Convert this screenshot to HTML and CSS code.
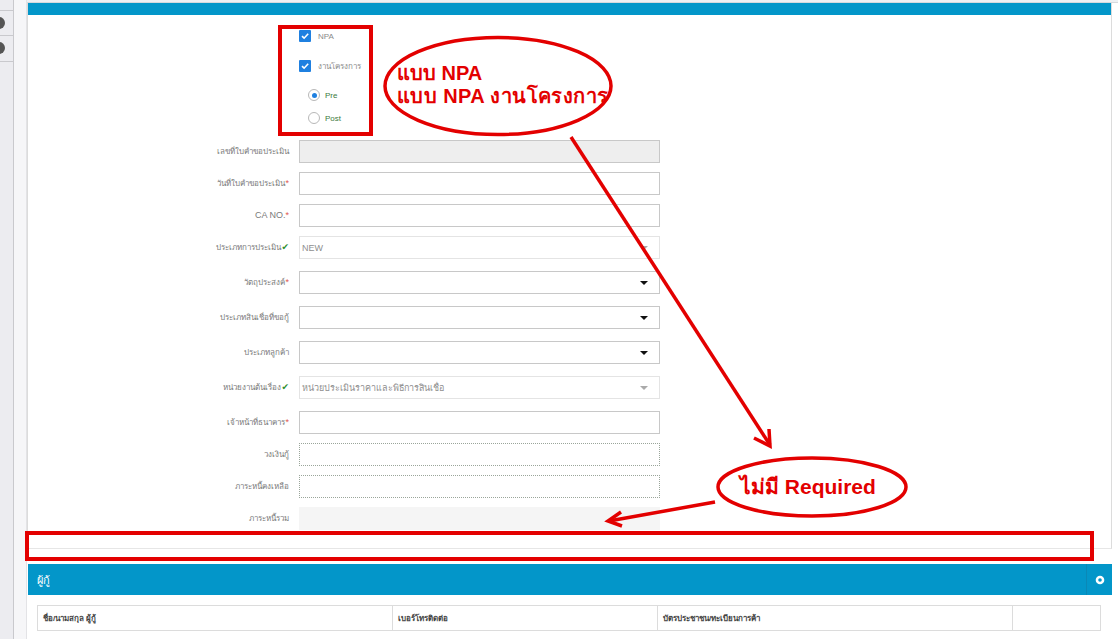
FILE: index.html
```html
<!DOCTYPE html>
<html lang="th">
<head>
<meta charset="utf-8">
<title>NPA</title>
<link rel="stylesheet" href="styles.css">
</head>
<body>
<div class="page">
  <aside class="rail">
    <div class="rail-item"><span class="dot"></span></div>
    <div class="rail-item"><span class="dot"></span></div>
  </aside>
  <div class="gutter"></div>
  <main class="content">
    <section class="panel">
      <div class="panel-bar"></div>
      <div class="panel-body">
        <div class="checks">
          <label class="check c1"><span class="box"><svg width="12" height="12" viewBox="0 0 12 12"><path d="M3 6.2 L5.1 8.2 L9.2 3.8" fill="none" stroke="#fff" stroke-width="1.6"/></svg></span><span class="check-text">NPA</span></label>
          <label class="check c2"><span class="box"><svg width="12" height="12" viewBox="0 0 12 12"><path d="M3 6.2 L5.1 8.2 L9.2 3.8" fill="none" stroke="#fff" stroke-width="1.6"/></svg></span><span class="check-text">งานโครงการ</span></label>
          <label class="radio r1"><span class="circle on"></span><span class="radio-text">Pre</span></label>
          <label class="radio r2"><span class="circle"></span><span class="radio-text">Post</span></label>
        </div>
        <div class="form">
          <div class="row rt"><span class="lbl">เลขที่ใบคำขอประเมิน</span><div class="field readonly"></div></div>
          <div class="row rt"><span class="lbl">วันที่ใบคำขอประเมิน<i class="req">*</i></span><div class="field"></div></div>
          <div class="row rt"><span class="lbl lbl-lg">CA NO.<i class="req">*</i></span><div class="field"></div></div>
          <div class="row rs"><span class="lbl">ประเภทการประเมิน<i class="ok">✔</i></span><div class="field select disabled"><span class="val">NEW</span></div></div>
          <div class="row rs"><span class="lbl">วัตถุประสงค์<i class="req">*</i></span><div class="field select"></div></div>
          <div class="row rs"><span class="lbl">ประเภทสินเชื่อที่ขอกู้</span><div class="field select"></div></div>
          <div class="row rs"><span class="lbl">ประเภทลูกค้า</span><div class="field select"></div></div>
          <div class="row rs"><span class="lbl">หน่วยงานต้นเรื่อง<i class="ok">✔</i></span><div class="field select disabled"><span class="val">หน่วยประเมินราคาและพิธีการสินเชื่อ</span></div></div>
          <div class="row rt"><span class="lbl">เจ้าหน้าที่ธนาคาร<i class="req">*</i></span><div class="field"></div></div>
          <div class="row rt"><span class="lbl">วงเงินกู้</span><div class="field dotted"></div></div>
          <div class="row rt"><span class="lbl">ภาระหนี้คงเหลือ</span><div class="field dotted"></div></div>
          <div class="row rt"><span class="lbl">ภาระหนี้รวม</span><div class="field plain"></div></div>
        </div>
      </div>
    </section>
    <section class="panel2">
      <header class="panel-head">
        <span class="head-title">ผู้กู้</span>
        <span class="head-tool"><svg width="10" height="10" viewBox="0 0 10 10"><circle cx="5" cy="5" r="4.3" fill="#fff"/><circle cx="5" cy="5" r="1.8" fill="#0396c9"/></svg></span>
      </header>
      <div class="panel2-body">
        <table class="grid">
          <thead>
            <tr><th class="w1">ชื่อ/นามสกุล ผู้กู้</th><th class="w2">เบอร์โทรติดต่อ</th><th class="w3">บัตรประชาชน/ทะเบียนการค้า</th><th class="w4"></th></tr>
          </thead>
        </table>
      </div>
    </section>
  </main>

  <svg class="annot" width="1118" height="639" viewBox="0 0 1118 639">
    <g fill="none" stroke="#e30000">
      <rect x="280" y="27" width="91" height="107" stroke-width="4"/>
      <rect x="27" y="533" width="1065" height="26" stroke-width="4"/>
      <ellipse cx="498" cy="86" rx="113" ry="48.5" stroke-width="3.5"/>
      <ellipse cx="812" cy="487" rx="94" ry="29" stroke-width="3.5"/>
      <line x1="571" y1="137" x2="770" y2="445" stroke-width="3.5"/>
      <polyline points="754,438 770,446 769,429" stroke-width="3.5" stroke-linejoin="miter"/>
      <line x1="715" y1="502" x2="609" y2="521" stroke-width="3.5"/>
      <polyline points="621,512 608,521 622,526" stroke-width="3.5"/>
    </g>
    <g fill="#e30000" font-family="'Liberation Sans', 'DejaVu Sans', sans-serif" font-weight="bold">
      <text x="397" y="80" font-size="20">แบบ NPA</text>
      <text x="397" y="103" font-size="20" textLength="211" lengthAdjust="spacing">แบบ NPA งานโครงการ</text>
      <text x="740" y="494" font-size="21">ไม่มี Required</text>
    </g>
  </svg>
</div>
</body>
</html>
```

FILE: styles.css
```css
* { box-sizing: border-box; }
html, body { margin: 0; padding: 0; }
body {
  width: 1118px;
  height: 639px;
  overflow: hidden;
  background: #fff;
  font-family: "Liberation Sans", "DejaVu Sans", sans-serif;
  color: #333;
}
.page {
  position: relative;
  display: flex;
  height: 639px;
}

/* left rail */
.rail {
  width: 14px;
  flex: none;
  background: #ececf0;
  border-right: 1px solid #c9c9cd;
  padding-top: 10px;
}
.rail-item {
  position: relative;
  height: 25px;
  border-top: 1px solid #c9c9cd;
  overflow: hidden;
}
.rail-item:last-child {
  height: 27px;
  border-bottom: 1px solid #c9c9cd;
}
.dot {
  position: absolute;
  left: -7px;
  top: 6px;
  width: 12px;
  height: 12px;
  border-radius: 50%;
  background: #555;
}
.gutter {
  width: 13px;
  flex: none;
  background: #f6f6f8;
  border-right: 1px solid #e3e3e6;
}

/* content */
.content {
  flex: 1;
  padding: 3px 6px 0 0;
  background: linear-gradient(#eef0f3 0 2px, #d6d9dd 2px 3px, #fff 3px);
}
.panel {
  height: 546px;
  border-left: 1px solid #dcdcdc;
  border-right: 1px solid #dcdcdc;
  border-bottom: 1px solid #e6e6e6;
  background: #fff;
}
.panel-bar {
  height: 12px;
  background: #0396c9;
}
.panel-body {
  padding-top: 15px;
}

/* checkboxes */
.checks {
  display: flex;
  flex-direction: column;
  padding-left: 271px;
  height: 110px;
}
.check, .radio {
  display: flex;
  align-items: center;
  height: 12px;
  font-size: 8px;
}
.c2 { margin-top: 18px; }
.r1 { margin-top: 17px; padding-left: 9px; }
.r2 { margin-top: 11px; padding-left: 9px; }
.box {
  width: 12px;
  height: 12px;
  background: #1f80e0;
  border-radius: 1px;
  display: flex;
}
.check-text {
  margin-left: 7px;
  color: #8a8a8a;
}
.circle {
  width: 12px;
  height: 12px;
  border-radius: 50%;
  border: 1px solid #b8b8b8;
  background: #fff;
  display: flex;
  align-items: center;
  justify-content: center;
}
.circle.on::before {
  content: "";
  width: 5px;
  height: 5px;
  border-radius: 50%;
  background: #1f80e0;
}
.radio-text {
  margin-left: 5px;
  color: #3d7a3d;
}

/* form */
.form {
  display: flex;
  flex-direction: column;
}
.row {
  display: grid;
  grid-template-columns: 261px 361px;
  column-gap: 10px;
  align-items: start;
}
.rt { height: 32px; }
.rs { height: 35px; }
.lbl {
  text-align: right;
  font-size: 8px;
  line-height: 23px;
  color: #7a7a7a;
  white-space: nowrap;
}
.lbl-lg { font-size: 9px; }
.req {
  font-style: normal;
  color: #e0564f;
  font-size: 9px;
}
.ok {
  font-style: normal;
  color: #2f8f2f;
  font-size: 9px;
  font-weight: bold;
}
.field {
  position: relative;
  height: 23px;
  border: 1px solid #c8c8c8;
  background: #fff;
  display: flex;
  align-items: center;
  padding-left: 2px;
}
.field.readonly { background: #eeeeee; }
.field.dotted { border: 1px dotted #9aa59a; }
.field.plain { border: none; background: #f5f5f5; }
.field.disabled { border-color: #e4e4e4; }
.val {
  font-size: 9px;
  color: #8f8f8f;
}
.field.select::after {
  content: "";
  position: absolute;
  right: 11px;
  top: 9px;
  border-left: 4px solid transparent;
  border-right: 4px solid transparent;
  border-top: 4px solid #111;
}
.field.select.disabled::after { border-top-color: #aaa; }

/* borrower panel */
.panel2 {
  margin-top: 15px;
  margin-left: 1px;
}
.panel-head {
  height: 31px;
  background: #0396c9;
  display: flex;
  align-items: center;
  justify-content: space-between;
  color: #fff;
}
.head-title {
  padding-left: 9px;
  font-size: 11px;
}
.head-tool {
  width: 26px;
  height: 31px;
  display: flex;
  align-items: center;
  justify-content: center;
  border-left: 1px solid #0a88b6;
}
.panel2-body {
  padding: 10px 0 0 9px;
}
.grid {
  border-collapse: collapse;
  width: 1063px;
  table-layout: fixed;
}
.grid th {
  height: 25px;
  border: 1px solid #dcdcdc;
  text-align: left;
  padding: 0 5px;
  font-size: 8px;
  font-weight: bold;
  color: #444;
}
.w1 { width: 355px; }
.w2 { width: 265px; }
.w3 { width: 355px; }
.w4 { width: 88px; }

/* annotation overlay */
.annot {
  position: absolute;
  left: 0;
  top: 0;
  pointer-events: none;
}
```
